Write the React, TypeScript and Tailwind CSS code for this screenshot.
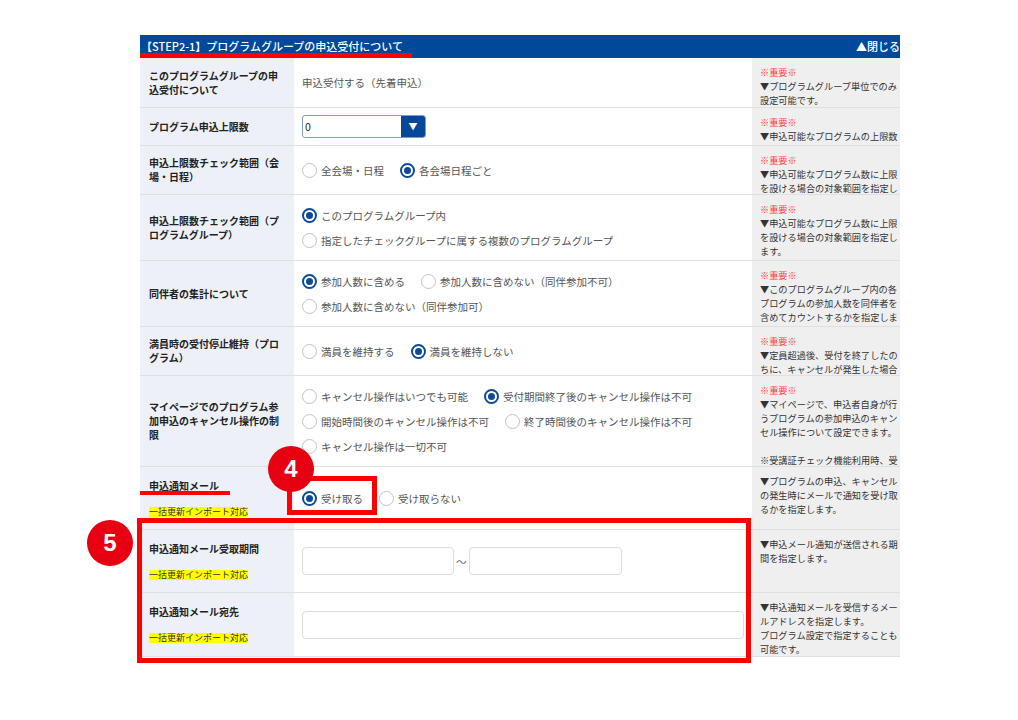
import type { ReactNode } from "react";

type Opt = { label: string; checked?: boolean };

type Row = {
  h: string;
  label: ReactNode;
  tag?: boolean;
  body: ReactNode;
  important?: boolean;
  notes: string[];
};

function Radio({ label, checked }: Opt) {
  return (
    <span className="inline-flex items-center gap-[4px] whitespace-nowrap">
      {checked ? (
        <span className="flex h-[15px] w-[15px] items-center justify-center rounded-full border-[2px] border-[#0c4a93] bg-white">
          <span className="h-[7px] w-[7px] rounded-full bg-[#0c4a93]" />
        </span>
      ) : (
        <span className="h-[15px] w-[15px] rounded-full border-[1.5px] border-[#c2c2c2] bg-white" />
      )}
      <span>{label}</span>
    </span>
  );
}

function Radios({ lines }: { lines: Opt[][] }) {
  return (
    <div className="flex flex-col gap-[10px]">
      {lines.map((line, i) => (
        <div key={i} className="flex items-center gap-[16px]">
          {line.map((o) => (
            <Radio key={o.label} {...o} />
          ))}
        </div>
      ))}
    </div>
  );
}

const rows: Row[] = [
  {
    h: "h-[50px]",
    label: (
      <>
        このプログラムグループの申
        <br />
        込受付について
      </>
    ),
    body: <span>申込受付する（先着申込）</span>,
    important: true,
    notes: ["▼プログラムグループ単位でのみ", "設定可能です。"],
  },
  {
    h: "h-[38px]",
    label: "プログラム申込上限数",
    body: (
      <div className="flex h-[23px] w-[124px] items-stretch overflow-hidden rounded-[3px] border border-[#7f9dc4] bg-white">
        <span className="flex flex-1 items-center pl-[2px] text-[#222]">0</span>
        <span className="flex w-[24px] items-center justify-center bg-[#06479a] text-[9px] text-white">▼</span>
      </div>
    ),
    important: true,
    notes: ["▼申込可能なプログラムの上限数"],
  },
  {
    h: "h-[49px]",
    label: (
      <>
        申込上限数チェック範囲（会
        <br />
        場・日程）
      </>
    ),
    body: <Radios lines={[[{ label: "全会場・日程" }, { label: "各会場日程ごと", checked: true }]]} />,
    important: true,
    notes: ["▼申込可能なプログラム数に上限", "を設ける場合の対象範囲を指定し"],
  },
  {
    h: "h-[66px]",
    label: (
      <>
        申込上限数チェック範囲（プ
        <br />
        ログラムグループ）
      </>
    ),
    body: (
      <Radios
        lines={[
          [{ label: "このプログラムグループ内", checked: true }],
          [{ label: "指定したチェックグループに属する複数のプログラムグループ" }],
        ]}
      />
    ),
    important: true,
    notes: ["▼申込可能なプログラム数に上限", "を設ける場合の対象範囲を指定し", "ます。"],
  },
  {
    h: "h-[66px]",
    label: "同伴者の集計について",
    body: (
      <Radios
        lines={[
          [{ label: "参加人数に含める", checked: true }, { label: "参加人数に含めない（同伴参加不可）" }],
          [{ label: "参加人数に含めない（同伴参加可）" }],
        ]}
      />
    ),
    important: true,
    notes: ["▼このプログラムグループ内の各", "プログラムの参加人数を同伴者を", "含めてカウントするかを指定しま"],
  },
  {
    h: "h-[49px]",
    label: (
      <>
        満員時の受付停止維持（プロ
        <br />
        グラム）
      </>
    ),
    body: <Radios lines={[[{ label: "満員を維持する" }, { label: "満員を維持しない", checked: true }]]} />,
    important: true,
    notes: ["▼定員超過後、受付を終了したの", "ちに、キャンセルが発生した場合"],
  },
  {
    h: "h-[91px]",
    label: (
      <>
        マイページでのプログラム参
        <br />
        加申込のキャンセル操作の制
        <br />限
      </>
    ),
    body: (
      <Radios
        lines={[
          [{ label: "キャンセル操作はいつでも可能" }, { label: "受付期間終了後のキャンセル操作は不可", checked: true }],
          [{ label: "開始時間後のキャンセル操作は不可" }, { label: "終了時間後のキャンセル操作は不可" }],
          [{ label: "キャンセル操作は一切不可" }],
        ]}
      />
    ),
    important: true,
    notes: [
      "▼マイページで、申込者自身が行",
      "うプログラムの参加申込のキャン",
      "セル操作について設定できます。",
      "",
      "※受講証チェック機能利用時、受",
    ],
  },
  {
    h: "h-[63px]",
    label: "申込通知メール",
    tag: true,
    body: <Radios lines={[[{ label: "受け取る", checked: true }, { label: "受け取らない" }]]} />,
    notes: ["▼プログラムの申込、キャンセル", "の発生時にメールで通知を受け取", "るかを指定します。"],
  },
  {
    h: "h-[63px]",
    label: "申込通知メール受取期間",
    tag: true,
    body: (
      <div className="flex items-center gap-[2px]">
        <div className="h-[28px] w-[152px] rounded-[4px] border border-[#dcdcdc] bg-white" />
        <span className="text-[#666]">〜</span>
        <div className="h-[28px] w-[153px] rounded-[4px] border border-[#dcdcdc] bg-white" />
      </div>
    ),
    notes: ["▼申込メール通知が送信される期", "間を指定します。"],
  },
  {
    h: "h-[64px]",
    label: "申込通知メール宛先",
    tag: true,
    body: <div className="h-[28px] w-[442px] rounded-[4px] border border-[#dcdcdc] bg-white" />,
    notes: ["▼申込通知メールを受信するメー", "ルアドレスを指定します。", "プログラム設定で指定することも", "可能です。"],
  },
];

export default function App() {
  return (
    <div
      className="relative h-[720px] w-[1018px] overflow-hidden bg-white"
      style={{ fontFamily: '"Noto Sans CJK JP", "Noto Sans", sans-serif' }}
    >
      <div className="pl-[140px] pt-[35px]">
        <div className="w-[760px] overflow-hidden">
          <div className="flex h-[23px] items-center justify-between bg-[#00489a] pl-[1px] text-[11px] font-medium text-white">
            <span>【STEP2-1】プログラムグループの申込受付について</span>
            <span className="whitespace-nowrap">▲閉じる</span>
          </div>
          {rows.map((r, i) => (
            <div key={i} className={`flex ${r.h} border-b border-[#e0e0e0]`}>
              <div
                className={`flex w-[154px] shrink-0 flex-col bg-[#edf1f7] pl-[9px] text-[10px] font-bold leading-[14px] text-[#222] ${
                  r.tag ? "justify-start gap-[14px] pt-[12px]" : "justify-center"
                }`}
              >
                <div>{r.label}</div>
                {r.tag && (
                  <span className="w-fit bg-[#ffff00] text-[9px] font-normal leading-[10px] text-[#333]">
                    一括更新インポート対応
                  </span>
                )}
              </div>
              <div className="flex w-[458px] shrink-0 flex-col justify-center pl-[8px] text-[10.5px] leading-[15px] text-[#555]">
                {r.body}
              </div>
              <div className="w-[148px] shrink-0 overflow-hidden bg-[#efefef] pl-[8px] pt-[7px] text-[9.2px] leading-[14px] text-[#333]">
                {r.important && <div className="h-[14px] text-[#ff3b3b]">※重要※</div>}
                {r.notes.map((n, j) => (
                  <div key={j} className="h-[14px] whitespace-nowrap">
                    {n}
                  </div>
                ))}
              </div>
            </div>
          ))}
        </div>
      </div>

      {/* annotations */}
      <div className="absolute left-[140px] top-[53px] h-[5px] w-[272px] bg-[#ff0000]" />
      <div className="absolute left-[140px] top-[491px] h-[4px] w-[90px] bg-[#ff0000]" />
      <div className="absolute left-[287px] top-[476px] h-[39px] w-[90px] border-[5px] border-[#ff0000]" />
      <div className="absolute left-[137px] top-[518px] h-[145px] w-[614px] border-[5px] border-[#ff0000]" />
      <div
        className="absolute left-[268px] top-[446px] flex h-[46px] w-[46px] items-center justify-center rounded-full bg-[#e60012] text-[24px] font-bold text-white"
        style={{ fontFamily: '"Liberation Sans", Arial, sans-serif' }}
      >
        4
      </div>
      <div
        className="absolute left-[87px] top-[520px] flex h-[46px] w-[46px] items-center justify-center rounded-full bg-[#e60012] text-[24px] font-bold text-white"
        style={{ fontFamily: '"Liberation Sans", Arial, sans-serif' }}
      >
        5
      </div>
    </div>
  );
}
